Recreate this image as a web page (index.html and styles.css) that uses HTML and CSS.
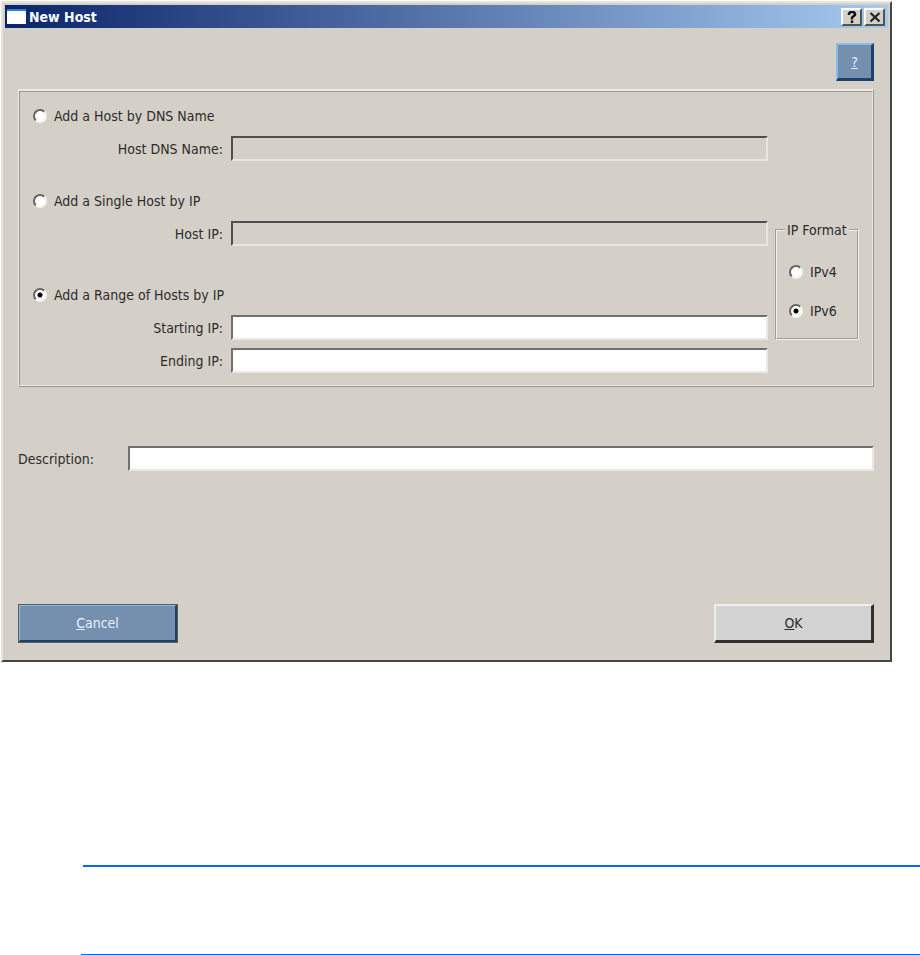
FILE: index.html
```html
<!DOCTYPE html>
<html lang="en">
<head>
    <meta charset="UTF-8">
    <meta name="viewport" content="width=device-width, initial-scale=1.0">
    <title>New Host</title>
    <link rel="stylesheet" href="styles.css">
</head>
<body>

<form class="window" onsubmit="return false">
    <div class="titlebar">
        <span class="titlebar-icon"></span>
        <h1 class="titlebar-text">New Host</h1>
        <button type="button" class="titlebar-button" aria-label="Help">
            <svg width="10" height="12" viewBox="0 0 10 12"><path d="M2 4V2.5L3.5 1H6.5L8 2.5V4L5 6.5V8.5M5 9.5V12" fill="none" stroke="#111" stroke-width="2.4"/></svg>
        </button>
        <button type="button" class="titlebar-button" aria-label="Close">
            <svg width="12" height="12" viewBox="0 0 12 12"><path d="M1.5 2L10.5 10.5M10.5 2L1.5 10.5" fill="none" stroke="#222" stroke-width="2.2"/></svg>
        </button>
    </div>

    <div class="content">
        <button type="button" class="button button-blue button-help"><u>?</u></button>

        <div class="group">
            <div class="hosts">
                <label class="radio"><input type="radio" name="mode"> Add a Host by DNS Name</label>
                <div class="field">
                    <label for="dns">Host DNS Name:</label>
                    <input type="text" id="dns" disabled>
                </div>

                <label class="radio"><input type="radio" name="mode"> Add a Single Host by IP</label>
                <div class="field">
                    <label for="ip">Host IP:</label>
                    <input type="text" id="ip" disabled>
                </div>

                <label class="radio radio-range"><input type="radio" name="mode" checked> Add a Range of Hosts by IP</label>
                <div class="field">
                    <label for="start">Starting IP:</label>
                    <input type="text" id="start">
                </div>
                <div class="field">
                    <label for="end">Ending IP:</label>
                    <input type="text" id="end">
                </div>
            </div>

            <fieldset class="format">
                <legend>IP Format</legend>
                <label class="radio"><input type="radio" name="format"> IPv4</label>
                <label class="radio"><input type="radio" name="format" checked> IPv6</label>
            </fieldset>
        </div>

        <div class="description">
            <label for="description">Description:</label>
            <input type="text" id="description">
        </div>

        <div class="actions">
            <button type="button" class="button button-blue button-cancel"><u>C</u>ancel</button>
            <button type="submit" class="button"><u>O</u>K</button>
        </div>
    </div>
</form>

<hr class="rule">
<hr class="rule rule-thin">

</body>
</html>
```
FILE: styles.css
```css
body {
    margin: 0;
    background-color: #fff;
    font-family: "DejaVu Sans Condensed", "DejaVu Sans", sans-serif;
    font-size: 14px;
    line-height: 20px;
    color: #2c2c2c;
}
button, input {
    font: inherit;
    color: inherit;
    box-sizing: border-box;
}

/* Window frame */
.window {
    margin: 1px 28px 0 1px;
    padding: 2px;
    border: 2px solid;
    border-color: #e6e4dd #44464a #44464a #e6e4dd;
    background-color: #d4d0c8;
}
.titlebar {
    display: flex;
    align-items: center;
    gap: 2px;
    height: 23px;
    padding: 0 3px 0 2px;
    background: linear-gradient(to right, #0a246a, #a6caf0);
}
.titlebar-icon {
    width: 19px;
    height: 15px;
    box-sizing: border-box;
    border-top: 2px solid #2a80dc;
    background-color: #fff;
}
.titlebar-text {
    flex: 1;
    margin: 0 1px;
    font-size: 14px;
    color: #fff;
}
.titlebar-button {
    display: flex;
    align-items: center;
    justify-content: center;
    width: 21px;
    height: 18px;
    padding: 0;
    border: 2px solid;
    border-color: #fff #55534e #55534e #fff;
    background-color: #d4d0c8;
}

.content {
    display: flex;
    flex-direction: column;
    padding: 15px 14px 15px 13px;
}

/* Buttons */
.button {
    width: 160px;
    height: 39px;
    padding: 0;
    border: 3px solid;
    border-color: #eeeeec #303030 #303030 #eeeeec;
    border-width: 2px 3px 3px 2px;
    background-color: #d3d3d3;
}
.button-blue {
    border-color: #86bcf0 #1c426c #1c426c #86bcf0;
    background-color: #7590ae;
    color: #e6f0fa;
}
.button-help {
    align-self: flex-end;
    width: 38px;
    height: 38px;
}
.button-cancel {
    outline: 1px solid #5c5c58;
    outline-offset: -1px;
}

/* Host options */
.group {
    display: flex;
    gap: 7px;
    margin-top: 8px;
    padding: 14px 13px 12px;
    border: 3px ridge #eceae5;
    border-width: 3px 2px 2px;
}
.hosts {
    flex: 1;
}
.radio {
    display: flex;
    align-items: center;
    gap: 7px;
    height: 20px;
}
.field + .radio {
    margin-top: 30px;
}
.field + .radio-range {
    margin-top: 39px;
}
.field {
    display: flex;
    align-items: center;
    gap: 8px;
    margin-top: 10px;
}
.field + .field {
    margin-top: 8px;
}
.field label {
    width: 190px;
    text-align: right;
}

input[type="text"] {
    flex: 1;
    min-width: 0;
    height: 25px;
    padding: 0 4px;
    border: 2px solid;
    border-color: #707070 #ebe9e3 #ebe9e3 #707070;
    background-color: #fff;
}
input[type="text"]:disabled {
    border-color: #505050 #e8e6e0 #e8e6e0 #505050;
    background-color: #d4d0c8;
}
input[type="radio"] {
    appearance: none;
    width: 14px;
    height: 14px;
    margin: 0;
    border: 2px solid;
    border-color: #66645f #f4f3f0 #f4f3f0 #66645f;
    border-radius: 50%;
    background-color: #fff;
}
input[type="radio"]:checked {
    background-image: radial-gradient(circle, #000 2px, #fff 3px);
}

.format {
    align-self: flex-end;
    box-sizing: border-box;
    width: 84px;
    min-width: 0;
    margin: 0 0 33px;
    padding: 23px 12px 17px;
    border: 2px groove #f2f1ee;
}
.format legend {
    margin-left: -4px;
    padding: 0 2px;
    line-height: 18px;
    white-space: nowrap;
}
.format .radio + .radio {
    margin-top: 19px;
}

.description {
    display: flex;
    align-items: center;
    margin-top: 59px;
}
.description label {
    width: 110px;
}
.actions {
    display: flex;
    justify-content: space-between;
    margin-top: 133px;
}

/* Page rules */
.rule {
    height: 2px;
    margin: 203px 0 0 83px;
    border: 0;
    background-color: #0068ff;
}
.rule-thin {
    height: 1px;
    margin: 87px 0 0 81px;
}
```
